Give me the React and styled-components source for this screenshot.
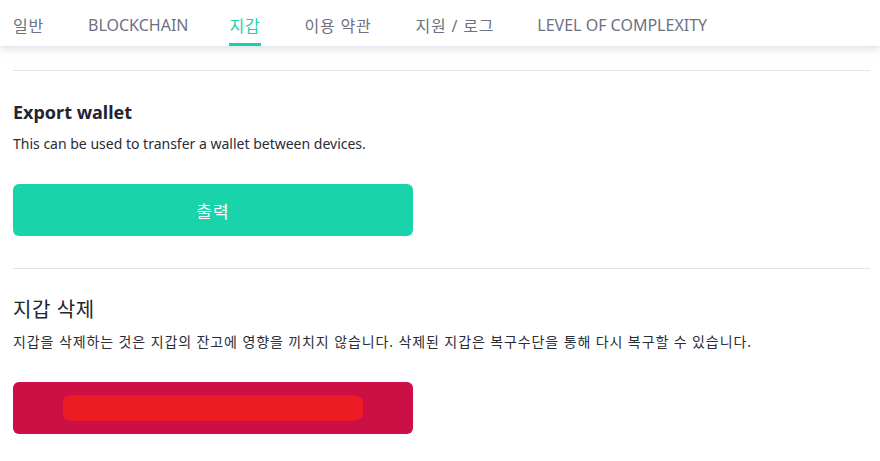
import React from 'react';
import styled, { createGlobalStyle } from 'styled-components';

const GlobalStyle = createGlobalStyle`
  body {
    margin: 0;
    background: #ffffff;
    font-family: "Noto Sans", "Noto Sans CJK KR", sans-serif;
  }
`;

const TopBar = styled.nav`
  display: flex;
  align-items: stretch;
  height: 46px;
  padding: 0 13px;
  background: #ffffff;
  box-shadow: 0 3px 8px rgba(190, 196, 214, 0.55);
  position: relative;
  z-index: 1;
`;

const Tab = styled.div`
  display: flex;
  align-items: center;
  margin-right: ${(p) => p.$gap}px;
  padding-top: 6px;
  font-size: 16px;
  letter-spacing: ${(p) => (p.$ko ? '0.8px' : '0')};
  color: ${(p) => (p.$active ? '#19cfa8' : '#6c7282')};
  border-bottom: 3px solid ${(p) => (p.$active ? '#19cfa8' : 'transparent')};
  box-sizing: border-box;
  white-space: nowrap;
`;

const Content = styled.main`
  padding: 24px 10px 0 13px;
`;

const Divider = styled.hr`
  margin: 0;
  border: none;
  border-top: 1px solid #e1e3ea;
`;

const Section = styled.section`
  padding: 29px 0 32px;
`;

const Heading = styled.h2`
  margin: 0;
  font-size: ${(p) => (p.$ko ? '20px' : '18px')};
  letter-spacing: ${(p) => (p.$ko ? '0.6px' : '0')};
  font-weight: ${(p) => (p.$ko ? 400 : 700)};
  color: #222430;
  line-height: 24px;
`;

const Text = styled.p`
  margin: 10px 0 0;
  font-size: 14px;
  letter-spacing: ${(p) => (p.$ko ? '0.9px' : '0')};
  color: #2a2c36;
  line-height: 20px;
`;

const Button = styled.button`
  display: flex;
  align-items: center;
  justify-content: center;
  margin-top: 30px;
  width: 400px;
  height: 52px;
  border: none;
  border-radius: 6px;
  background: ${(p) => p.$bg};
  color: #ffffff;
  font-family: inherit;
  font-size: 17px;
  letter-spacing: 1px;
`;

const Redaction = styled.span`
  display: block;
  width: 300px;
  height: 26px;
  border-radius: 12px / 6px;
  background: #ed1c24;
`;

const tabs = [
  { label: '일반', ko: true, gap: 44 },
  { label: 'BLOCKCHAIN', gap: 41 },
  { label: '지갑', ko: true, active: true, gap: 44 },
  { label: '이용 약관', ko: true, gap: 44 },
  { label: '지원 / 로그', ko: true, gap: 43 },
  { label: 'LEVEL OF COMPLEXITY', gap: 0 },
];

export default function App() {
  return (
    <>
      <GlobalStyle />
      <TopBar>
        {tabs.map((t) => (
          <Tab key={t.label} $active={t.active} $ko={t.ko} $gap={t.gap}>
            {t.label}
          </Tab>
        ))}
      </TopBar>
      <Content>
        <Divider />
        <Section>
          <Heading>Export wallet</Heading>
          <Text>This can be used to transfer a wallet between devices.</Text>
          <Button $bg="#19d3ab">출력</Button>
        </Section>
        <Divider />
        <Section>
          <Heading $ko>지갑 삭제</Heading>
          <Text $ko>
            지갑을 삭제하는 것은 지갑의 잔고에 영향을 끼치지 않습니다. 삭제된 지갑은 복구수단을 통해 다시 복구할 수 있습니다.
          </Text>
          <Button $bg="#cc0f44">
            <Redaction />
          </Button>
        </Section>
      </Content>
    </>
  );
}
